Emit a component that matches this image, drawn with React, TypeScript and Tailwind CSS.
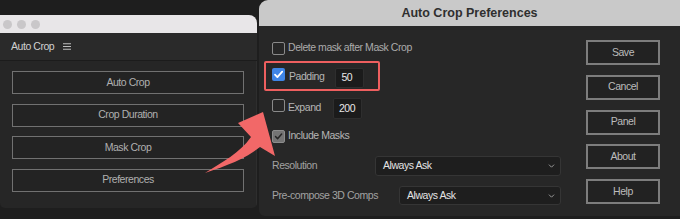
import { ReactNode } from 'react'

function Check({ color }: { color: string }) {
    return (
        <svg viewBox="0 0 13 13" className="w-full h-full">
            <path d="M3 6.6 L5.4 9.1 L10.2 3.6" fill="none" stroke={color} strokeWidth="1.8" strokeLinecap="round" strokeLinejoin="round" />
        </svg>
    )
}

function Checkbox({ state }: { state: 'off' | 'blue' | 'gray' }) {
    if (state === 'blue') {
        return (
            <div className="w-[13px] h-[13px] shrink-0 rounded-[2px] bg-[#3f85e6]">
                <Check color="#ffffff" />
            </div>
        )
    }
    if (state === 'gray') {
        return (
            <div className="w-[13px] h-[13px] shrink-0 rounded-[2px] bg-[#747474] border border-[#8c8c8c]">
                <Check color="#262626" />
            </div>
        )
    }
    return <div className="w-[13px] h-[13px] shrink-0 rounded-[2px] border-[1.5px] border-[#8a8a8a]" />
}

function NumberBox({ value, className }: { value: string; className: string }) {
    return (
        <div className={`flex items-center pl-[5px] bg-[#1b1b1b] border border-[#2e2e2e] rounded-[2px] text-[#e8e8e8] ${className}`}>
            {value}
        </div>
    )
}

function Select({ className }: { className: string }) {
    return (
        <div className={`ml-auto flex items-center justify-between pl-[7px] pr-[5px] bg-[#1e1e1e] border border-[#353535] rounded-[3px] text-[#e4e4e4] ${className}`}>
            <span>Always Ask</span>
            <svg viewBox="0 0 8 5" className="w-[7px] h-[4px]">
                <path d="M0.8 0.8 L4 4 L7.2 0.8" fill="none" stroke="#a8a8a8" strokeWidth="1.1" />
            </svg>
        </div>
    )
}

function PanelButton({ children }: { children: ReactNode }) {
    return (
        <div className="h-[23px] flex items-center justify-center border-[1.5px] border-[#717171] bg-[#232323] text-[#b0b0b0]">
            {children}
        </div>
    )
}

function DialogButton({ children }: { children: ReactNode }) {
    return (
        <div className="h-[25px] flex items-center justify-center border-2 border-[#7d7d7d] bg-[#222222] text-[#bcbcbc]">
            {children}
        </div>
    )
}

export default function App() {
    return (
        <div className="relative w-[680px] h-[219px] overflow-hidden bg-[#1e1e1e] flex items-start font-['Liberation_Sans',Arial,sans-serif] text-[10.5px] tracking-[-0.45px]">
            {/* Left panel window */}
            <div className="w-[257px] h-[193px] mt-[15px] flex flex-col rounded-b-[5px] overflow-hidden">
                <div className="h-[18px] shrink-0 flex items-center gap-[5px] pl-[2.5px] bg-[#e8e6e8] rounded-tr-[8px]">
                    <div className="w-[9px] h-[9px] rounded-full bg-[#c9c7c9]" />
                    <div className="w-[9px] h-[9px] rounded-full bg-[#c9c7c9]" />
                    <div className="w-[9px] h-[9px] rounded-full bg-[#c9c7c9]" />
                </div>
                <div className="h-[27px] shrink-0 flex items-center pl-[11px] bg-[#2a2a2a] text-[#d0d0d0]">
                    <span>Auto Crop</span>
                    <svg viewBox="0 0 8 7" className="ml-[9px] w-[8px] h-[7px]">
                        <path d="M0 0.75 H8 M0 3.5 H8 M0 6.25 H8" stroke="#bdbdbd" strokeWidth="1.1" />
                    </svg>
                </div>
                <div className="h-px shrink-0 bg-[#1c1c1c]" />
                <div className="flex-1 flex flex-col gap-[9.5px] pt-[10px] px-[12px] bg-[#262626] border-r border-[#2e2e2e]">
                    <PanelButton>Auto Crop</PanelButton>
                    <PanelButton>Crop Duration</PanelButton>
                    <PanelButton>Mask Crop</PanelButton>
                    <PanelButton>Preferences</PanelButton>
                </div>
            </div>

            {/* Preferences dialog */}
            <div className="ml-[2px] w-[421px] h-[216px] flex flex-col rounded-tl-[9px] rounded-bl-[6px] overflow-hidden">
                <div className="h-[26px] shrink-0 flex items-center justify-center bg-[#c9c9c9] text-[12.5px] font-bold tracking-normal text-[#2f2f2f]">
                    Auto Crop Preferences
                </div>
                <div className="flex-1 flex bg-[#272727]">
                    <div className="flex-1 flex flex-col pl-[13px]">
                        <div className="mt-[15px] h-[14px] flex items-center gap-[3px] text-[#ababab]">
                            <Checkbox state="off" />
                            <span>Delete mask after Mask Crop</span>
                        </div>
                        <div className="relative mt-[13px] h-[20px] flex items-start text-[#b6b6b6]">
                            <Checkbox state="blue" />
                            <span className="ml-[4px] leading-[14px] mt-[1px]">Padding</span>
                            <NumberBox value="50" className="ml-[11px] w-[29px] h-[20px]" />
                            <div className="absolute left-[-8px] top-[-7px] w-[116px] h-[30px] border-2 border-[#ee5f5f] rounded-[2px]" />
                        </div>
                        <div className="mt-[10px] h-[21px] flex items-start text-[#b6b6b6]">
                            <div className="mt-[1px]">
                                <Checkbox state="off" />
                            </div>
                            <span className="ml-[3px] leading-[14px] mt-[2px]">Expand</span>
                            <NumberBox value="200" className="ml-[12px] w-[29px] h-[21px]" />
                        </div>
                        <div className="mt-[10px] h-[14px] flex items-center gap-[3px] text-[#b6b6b6]">
                            <Checkbox state="gray" />
                            <span>Include Masks</span>
                        </div>
                        <div className="mt-[13px] h-[20px] flex items-center text-[#a2a2a2]">
                            <span>Resolution</span>
                            <Select className="w-[186px] h-[20px]" />
                        </div>
                        <div className="mt-[10px] h-[19px] flex items-center text-[#a2a2a2]">
                            <span>Pre-compose 3D Comps</span>
                            <Select className="w-[162px] h-[19px]" />
                        </div>
                    </div>
                    <div className="w-[74px] ml-[25px] mr-[20px] pt-[14px] flex flex-col gap-[9.75px]">
                        <DialogButton>Save</DialogButton>
                        <DialogButton>Cancel</DialogButton>
                        <DialogButton>Panel</DialogButton>
                        <DialogButton>About</DialogButton>
                        <DialogButton>Help</DialogButton>
                    </div>
                </div>
            </div>

            {/* Annotation arrow */}
            <svg className="absolute left-0 top-0 w-[680px] h-[219px] pointer-events-none" viewBox="0 0 680 219">
                <path
                    d="M205 173 C222 162 240 153 251 137 L238 123 L263 112 L275 156 L260 147 C245 159 226 166 205 173 Z"
                    fill="#f26868"
                />
            </svg>
        </div>
    )
}
